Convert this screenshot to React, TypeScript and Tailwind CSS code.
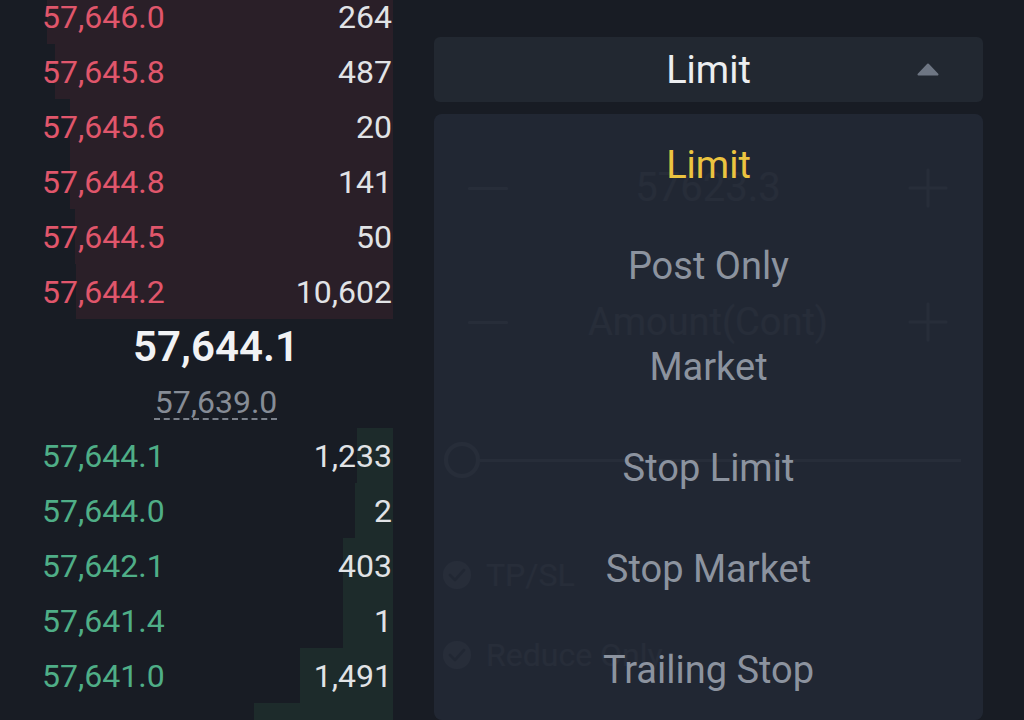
import React from 'react';

type Level = { price: string; qty: string; from: number };

const asks: Level[] = [
    { price: '57,646.0', qty: '264', from: 47 },
    { price: '57,645.8', qty: '487', from: 55 },
    { price: '57,645.6', qty: '20', from: 70 },
    { price: '57,644.8', qty: '141', from: 70 },
    { price: '57,644.5', qty: '50', from: 75 },
    { price: '57,644.2', qty: '10,602', from: 76 },
];

const bids: Level[] = [
    { price: '57,644.1', qty: '1,233', from: 357 },
    { price: '57,644.0', qty: '2', from: 355 },
    { price: '57,642.1', qty: '403', from: 343 },
    { price: '57,641.4', qty: '1', from: 343 },
    { price: '57,641.0', qty: '1,491', from: 300 },
    { price: '57,640.8', qty: '1,598', from: 254 },
];

const orderTypes = ['Limit', 'Post Only', 'Market', 'Stop Limit', 'Stop Market', 'Trailing Stop'];

const BookRow = ({ level, side }: { level: Level; side: 'ask' | 'bid' }) => {
    const bar = side === 'ask' ? '#2a1f28' : '#1d2b2b';
    return (
        <div
            className="flex h-[55px] w-[393px] items-center justify-between pl-[42px] pr-[1px] text-[32px] leading-none"
            style={{ backgroundImage: `linear-gradient(to right, transparent ${level.from}px, ${bar} ${level.from}px)` }}
        >
            <span className={side === 'ask' ? 'text-[#e0566b]' : 'text-[#4fae87]'}>{level.price}</span>
            <span className="text-[#e1e3e6]">{level.qty}</span>
        </div>
    );
};

const OrderBook = () => (
    <div className="-mt-[11px] w-[432px] shrink-0">
        {asks.map((l) => (
            <BookRow key={l.price} level={l} side="ask" />
        ))}
        <div className="flex h-[109px] flex-col items-center gap-[12px] pt-[3px]">
            <div className="text-[42px] font-semibold leading-[50px] text-[#f1f2f4]">57,644.1</div>
            <div className="text-[32px] leading-[36px] text-[#868c96] underline decoration-dashed decoration-[#7a808a] decoration-2 underline-offset-[5px]">
                57,639.0
            </div>
        </div>
        {bids.map((l) => (
            <BookRow key={l.price} level={l} side="bid" />
        ))}
    </div>
);

const Minus = () => <div className="h-[3px] w-[40px] rounded bg-[#eaecef]" />;

const Plus = () => (
    <svg width="40" height="40" viewBox="0 0 40 40" fill="none" stroke="#eaecef" strokeWidth="3" strokeLinecap="round">
        <path d="M20 2v36M2 20h36" />
    </svg>
);

const Check = ({ label }: { label: string }) => (
    <div className="flex h-[30px] items-center gap-[14px] pl-[8px]">
        <svg width="30" height="30" viewBox="0 0 30 30" fill="none">
            <circle cx="15" cy="15" r="14" fill="#eaecef" />
            <path d="M8 15l5 5 9-10" stroke="#181c24" strokeWidth="3" strokeLinecap="round" strokeLinejoin="round" />
        </svg>
        <span className="text-[32px] leading-none text-[#eaecef]">{label}</span>
    </div>
);

const OrderForm = () => (
    <div className="relative flex-1 pl-[2px] pr-[41px] pt-[37px]">
        <button className="grid h-[65px] w-full grid-cols-[1fr_auto_1fr] items-center rounded-md bg-[#222831] px-[44px]">
            <span />
            <span className="text-[38px] leading-none text-[#eceef0]">Limit</span>
            <span className="flex justify-end">
                <svg width="22" height="13" viewBox="0 0 22 13">
                    <path d="M11 1.5L20.5 11.5H1.5Z" fill="#6e7683" stroke="#6e7683" strokeWidth="2" strokeLinejoin="round" />
                </svg>
            </span>
        </button>

        {/* form that sits under the open menu */}
        <div className="flex h-[56px] items-center justify-between pl-[34px] pr-[35px] mt-[58px]">
            <Minus />
            <span className="text-[40px] leading-none text-[#eaecef]">57623.3</span>
            <Plus />
        </div>
        <div className="flex h-[56px] items-center justify-between pl-[34px] pr-[35px] mt-[78px]">
            <Minus />
            <span className="text-[38px] leading-none text-[#eaecef]">Amount(Cont)</span>
            <Plus />
        </div>
        <div className="mt-[90px] flex h-[40px] items-center pl-[10px] pr-[22px]">
            <div className="h-[36px] w-[36px] shrink-0 rounded-full border-[4px] border-[#eaecef]" />
            <div className="h-[3px] flex-1 bg-[#eaecef]" />
        </div>
        <div className="mt-[80px]">
            <Check label="TP/SL" />
        </div>
        <div className="mt-[50px]">
            <Check label="Reduce Only" />
        </div>

        <div className="absolute left-[2px] right-[41px] top-[114px] rounded-lg bg-[#222834f9]">
            {orderTypes.map((t, i) => (
                <div
                    key={t}
                    className={`flex h-[101px] items-center justify-center text-[38px] leading-none ${
                        i === 0 ? 'text-[#ecc440]' : 'text-[#8c939f]'
                    }`}
                >
                    {t}
                </div>
            ))}
        </div>
    </div>
);

export default function App() {
    return (
        <div className="flex h-[720px] w-[1024px] overflow-hidden bg-[#181c24] font-['Roboto',sans-serif]">
            <OrderBook />
            <OrderForm />
        </div>
    );
}
